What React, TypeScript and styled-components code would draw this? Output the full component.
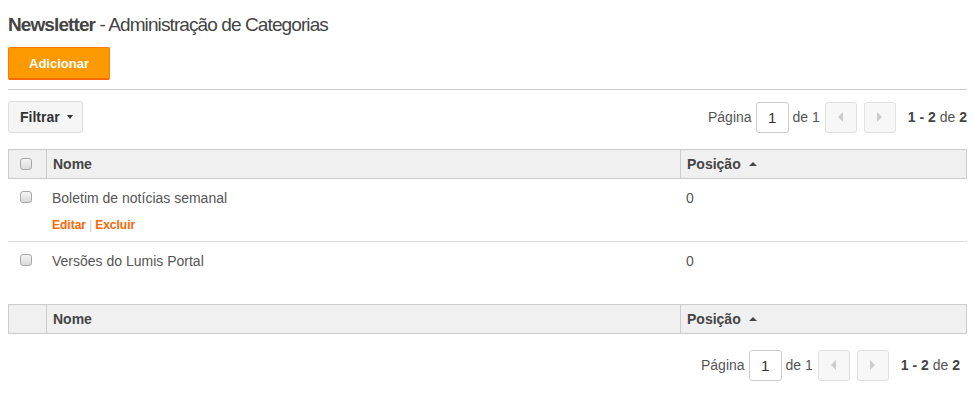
import React from 'react';
import styled, {createGlobalStyle} from 'styled-components';

const GlobalStyle = createGlobalStyle`
  body {
    margin: 0;
    background: #fff;
    font-family: "Liberation Sans", Arial, sans-serif;
    color: #555;
  }
`

const Page = styled.div`
  padding: 14px 8px 0;
  height: 388px;
`

const Title = styled.h1`
  margin: 0;
  font-size: 19px;
  line-height: 22px;
  font-weight: normal;
  color: #444;
  letter-spacing: -0.9px;
  >b {
    font-weight: bold;
  }
`

const AddButton = styled.button`
  display: block;
  margin-top: 11px;
  width: 102px;
  height: 33px;
  background: #fd9a00;
  border: 1px solid #ff7a00;
  border-bottom: 2px solid #ff6a00;
  border-radius: 2px;
  color: #fff;
  font-family: inherit;
  font-weight: bold;
  font-size: 13px;
  padding: 0;
`

const Divider = styled.hr`
  margin: 9px 0 11px;
  border: 0;
  border-top: 1px solid #ccc;
  height: 0;
`

const Toolbar = styled.div<{ $top?: number }>`
  display: flex;
  align-items: center;
  justify-content: space-between;
  height: 32px;
  margin-top: ${p => p.$top || 0}px;
`

const FilterButton = styled.button`
  display: flex;
  align-items: center;
  gap: 7px;
  height: 32px;
  width: 75px;
  padding: 0 0 0 11px;
  background: #f5f5f5;
  border: 1px solid #ddd;
  border-radius: 3px;
  font-family: inherit;
  font-weight: bold;
  font-size: 14px;
  color: #333;
`

const Caret = styled.span<{ $up?: boolean }>`
  width: 0;
  height: 0;
  border-left: ${p => p.$up ? 4 : 3}px solid transparent;
  border-right: ${p => p.$up ? 4 : 3}px solid transparent;
  ${p => p.$up ? 'border-bottom: 4px solid #444;' : 'border-top: 4px solid #333;'}
`

const Pager = styled.div<{ $inset?: number }>`
  display: flex;
  align-items: center;
  font-size: 14px;
  color: #555;
  margin-left: auto;
  margin-right: ${p => p.$inset || 0}px;
`

const PageInput = styled.div`
  width: 33px;
  height: 31px;
  box-sizing: border-box;
  border: 1px solid #ccc;
  border-radius: 3px;
  display: flex;
  align-items: center;
  justify-content: center;
  color: #333;
  margin: 0 4px;
  font-size: 15px;
`

const ArrowButton = styled.div<{ $gap: number }>`
  width: 32px;
  height: 31px;
  box-sizing: border-box;
  border: 1px solid #e0e0e0;
  border-radius: 3px;
  background: #f7f7f7;
  display: flex;
  align-items: center;
  justify-content: center;
  margin-left: ${p => p.$gap}px;
`

const Arrow = styled.span<{ $dir: 'left' | 'right' }>`
  width: 0;
  height: 0;
  border-top: 5px solid transparent;
  border-bottom: 5px solid transparent;
  ${p => p.$dir === 'left' ? 'border-right: 5px solid #ccc;' : 'border-left: 5px solid #ccc;'}
`

const Count = styled.span`
  margin-left: 12px;
  color: #555;
  >b {
    color: #444;
  }
`

const HeaderRow = styled.div<{ $top: number }>`
  display: grid;
  grid-template-columns: 37px 634px 1fr;
  margin-top: ${p => p.$top}px;
  height: 28px;
  background: #f0f0f0;
  border: 1px solid #ccc;
  font-size: 14px;
  font-weight: bold;
  color: #444;
`

const HeadCell = styled.div<{ $line?: boolean }>`
  display: flex;
  align-items: center;
  gap: 8px;
  padding-left: ${p => p.$line ? 6 : 11}px;
  border-left: ${p => p.$line ? '1px solid #ccc' : '0'};
`

const Check = styled.span`
  display: inline-block;
  width: 10px;
  height: 10px;
  border: 1px solid #a8a8a8;
  border-radius: 3px;
  background: linear-gradient(#f4f4f4, #dadada);
`

const Row = styled.div<{ $last?: boolean }>`
  display: grid;
  grid-template-columns: 38px 634px 1fr;
  padding: 10px 0 0;
  height: 52px;
  border-bottom: ${p => p.$last ? '0' : '1px solid #ddd'};
  font-size: 14px;
  line-height: 18px;
  color: #555;
`

const CheckCell = styled.div`
  display: flex;
  align-items: flex-start;
  padding: 2px 0 0 12px;
`

const NameCell = styled.div`
  padding-left: 6px;
`

const Actions = styled.div`
  margin-top: 9px;
  font-size: 12px;
  font-weight: bold;
  color: #f60;
  >span {
    color: #ccc;
    font-weight: normal;
    margin: 0 3px;
  }
`

const PosCell = styled.div`
  padding-left: 6px;
`

function Pagination({inset}: { inset?: number }) {
  return (
    <Pager $inset={inset}>
      Página
      <PageInput>1</PageInput>
      de 1
      <ArrowButton $gap={5}><Arrow $dir="left"/></ArrowButton>
      <ArrowButton $gap={7}><Arrow $dir="right"/></ArrowButton>
      <Count><b>1 - 2</b> de <b>2</b></Count>
    </Pager>
  )
}

const rows = [
  {id: 1, name: 'Boletim de notícias semanal', pos: 0, actions: true},
  {id: 2, name: 'Versões do Lumis Portal', pos: 0, actions: false},
]

export default function App() {
  return (
    <Page>
      <GlobalStyle/>
      <Title><b>Newsletter</b> - Administração de Categorias</Title>
      <AddButton>Adicionar</AddButton>
      <Divider/>
      <Toolbar>
        <FilterButton>Filtrar <Caret/></FilterButton>
        <Pagination/>
      </Toolbar>
      <HeaderRow $top={16}>
        <HeadCell><Check/></HeadCell>
        <HeadCell $line>Nome</HeadCell>
        <HeadCell $line>Posição <Caret $up/></HeadCell>
      </HeaderRow>
      {
        rows.map((r, i) => (
          <Row key={r.id} $last={i === rows.length - 1}>
            <CheckCell><Check/></CheckCell>
            <NameCell>
              {r.name}
              {r.actions && <Actions>Editar<span>|</span>Excluir</Actions>}
            </NameCell>
            <PosCell>{r.pos}</PosCell>
          </Row>
        ))
      }
      <HeaderRow $top={0}>
        <HeadCell/>
        <HeadCell $line>Nome</HeadCell>
        <HeadCell $line>Posição <Caret $up/></HeadCell>
      </HeaderRow>
      <Toolbar $top={15}>
        <Pagination inset={7}/>
      </Toolbar>
    </Page>
  )
}
